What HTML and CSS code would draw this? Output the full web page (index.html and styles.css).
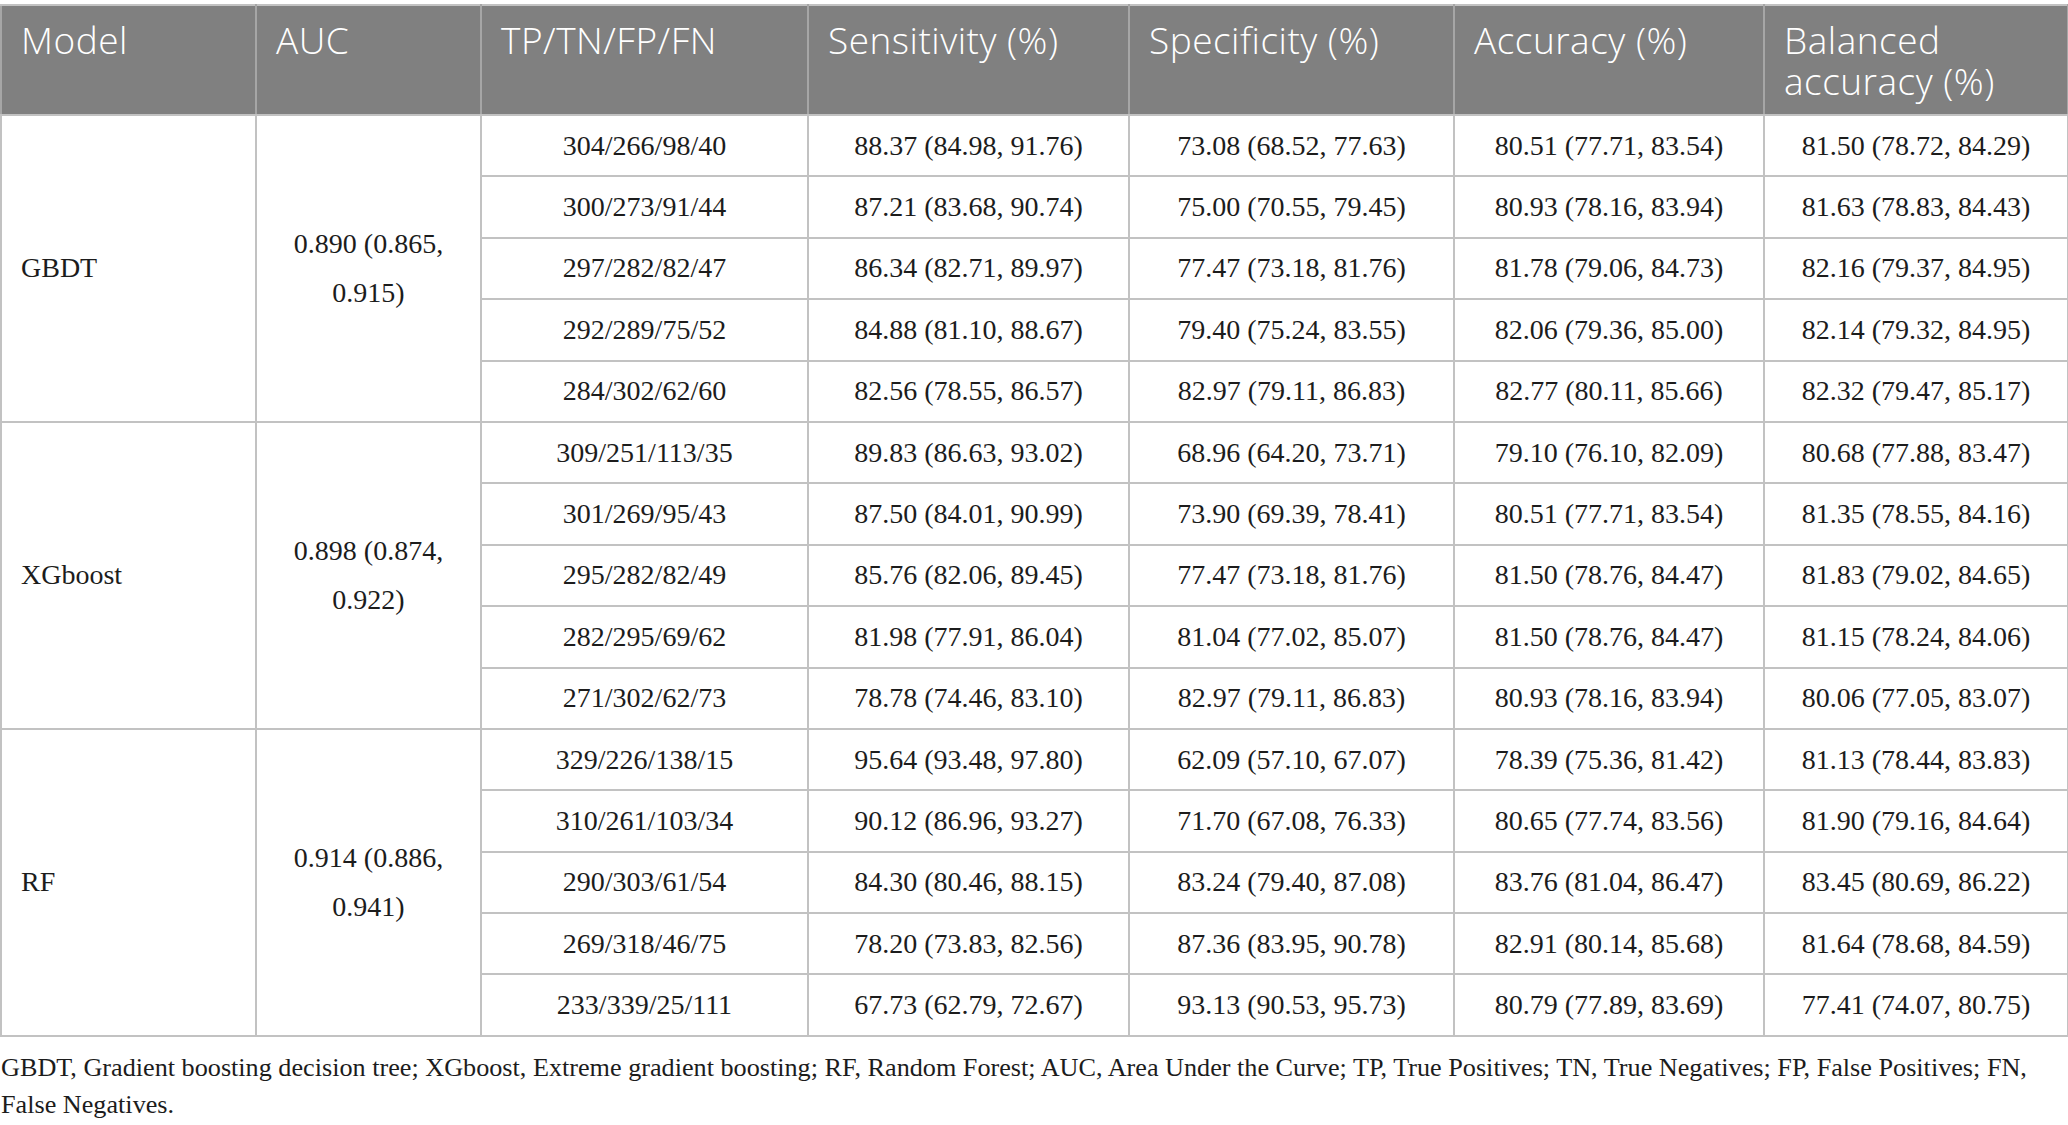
FILE: index.html
```html
<!DOCTYPE html>
<html lang="en">
<head>
<meta charset="utf-8">
<title>Model performance</title>
<link rel="stylesheet" href="styles.css">
</head>
<body>
<div class="wrap">
<table class="results">
  <colgroup>
    <col class="c1"><col class="c2"><col class="c3"><col class="c4"><col class="c5"><col class="c6"><col class="c7">
  </colgroup>
  <thead>
    <tr>
      <th>Model</th>
      <th>AUC</th>
      <th>TP/TN/FP/FN</th>
      <th>Sensitivity (%)</th>
      <th>Specificity (%)</th>
      <th>Accuracy (%)</th>
      <th>Balanced accuracy (%)</th>
    </tr>
  </thead>
  <tbody>
    <tr>
      <td rowspan="5" class="model">GBDT</td>
      <td rowspan="5" class="auc">0.890 (0.865, 0.915)</td>
      <td>304/266/98/40</td><td>88.37 (84.98, 91.76)</td><td>73.08 (68.52, 77.63)</td><td>80.51 (77.71, 83.54)</td><td>81.50 (78.72, 84.29)</td>
    </tr>
    <tr><td>300/273/91/44</td><td>87.21 (83.68, 90.74)</td><td>75.00 (70.55, 79.45)</td><td>80.93 (78.16, 83.94)</td><td>81.63 (78.83, 84.43)</td></tr>
    <tr><td>297/282/82/47</td><td>86.34 (82.71, 89.97)</td><td>77.47 (73.18, 81.76)</td><td>81.78 (79.06, 84.73)</td><td>82.16 (79.37, 84.95)</td></tr>
    <tr><td>292/289/75/52</td><td>84.88 (81.10, 88.67)</td><td>79.40 (75.24, 83.55)</td><td>82.06 (79.36, 85.00)</td><td>82.14 (79.32, 84.95)</td></tr>
    <tr><td>284/302/62/60</td><td>82.56 (78.55, 86.57)</td><td>82.97 (79.11, 86.83)</td><td>82.77 (80.11, 85.66)</td><td>82.32 (79.47, 85.17)</td></tr>
    <tr>
      <td rowspan="5" class="model">XGboost</td>
      <td rowspan="5" class="auc">0.898 (0.874, 0.922)</td>
      <td>309/251/113/35</td><td>89.83 (86.63, 93.02)</td><td>68.96 (64.20, 73.71)</td><td>79.10 (76.10, 82.09)</td><td>80.68 (77.88, 83.47)</td>
    </tr>
    <tr><td>301/269/95/43</td><td>87.50 (84.01, 90.99)</td><td>73.90 (69.39, 78.41)</td><td>80.51 (77.71, 83.54)</td><td>81.35 (78.55, 84.16)</td></tr>
    <tr><td>295/282/82/49</td><td>85.76 (82.06, 89.45)</td><td>77.47 (73.18, 81.76)</td><td>81.50 (78.76, 84.47)</td><td>81.83 (79.02, 84.65)</td></tr>
    <tr><td>282/295/69/62</td><td>81.98 (77.91, 86.04)</td><td>81.04 (77.02, 85.07)</td><td>81.50 (78.76, 84.47)</td><td>81.15 (78.24, 84.06)</td></tr>
    <tr><td>271/302/62/73</td><td>78.78 (74.46, 83.10)</td><td>82.97 (79.11, 86.83)</td><td>80.93 (78.16, 83.94)</td><td>80.06 (77.05, 83.07)</td></tr>
    <tr>
      <td rowspan="5" class="model">RF</td>
      <td rowspan="5" class="auc">0.914 (0.886, 0.941)</td>
      <td>329/226/138/15</td><td>95.64 (93.48, 97.80)</td><td>62.09 (57.10, 67.07)</td><td>78.39 (75.36, 81.42)</td><td>81.13 (78.44, 83.83)</td>
    </tr>
    <tr><td>310/261/103/34</td><td>90.12 (86.96, 93.27)</td><td>71.70 (67.08, 76.33)</td><td>80.65 (77.74, 83.56)</td><td>81.90 (79.16, 84.64)</td></tr>
    <tr><td>290/303/61/54</td><td>84.30 (80.46, 88.15)</td><td>83.24 (79.40, 87.08)</td><td>83.76 (81.04, 86.47)</td><td>83.45 (80.69, 86.22)</td></tr>
    <tr><td>269/318/46/75</td><td>78.20 (73.83, 82.56)</td><td>87.36 (83.95, 90.78)</td><td>82.91 (80.14, 85.68)</td><td>81.64 (78.68, 84.59)</td></tr>
    <tr><td>233/339/25/111</td><td>67.73 (62.79, 72.67)</td><td>93.13 (90.53, 95.73)</td><td>80.79 (77.89, 83.69)</td><td>77.41 (74.07, 80.75)</td></tr>
  </tbody>
</table>
<p class="note">GBDT, Gradient boosting decision tree; XGboost, Extreme gradient boosting; RF, Random Forest; AUC, Area Under the Curve; TP, True Positives; TN, True Negatives; FP, False Positives; FN, False Negatives.</p>
</div>
</body>
</html>
```

FILE: styles.css
```css
html, body {
  margin: 0;
  padding: 0;
  background: #ffffff;
}

.wrap {
  padding-top: 4px;
  width: 2067px;
}

.results {
  border-collapse: collapse;
  table-layout: fixed;
  width: 2067px;
  border: 2px solid #c2c2c2;
}

.c1 { width: 255px; }
.c2 { width: 225px; }
.c3 { width: 327px; }
.c4 { width: 321px; }
.c5 { width: 325px; }
.c6 { width: 310px; }
.c7 { width: 304px; }

.results th {
  background: #808080;
  color: #ffffff;
  font-family: "Open Sans", "Noto Sans", sans-serif;
  font-weight: 300;
  font-size: 37px;
  letter-spacing: 0.5px;
  line-height: 41px;
  text-align: left;
  vertical-align: top;
  padding: 13px 19px 0 19px;
  height: 110px;
  box-sizing: border-box;
  border: 2px solid #a6a6a6;
  border-top-color: #c2c2c2;
  border-bottom-color: #c2c2c2;
}

.results td {
  font-family: "Liberation Serif", "Times New Roman", serif;
  font-size: 28px;
  line-height: 34px;
  color: #1c1c1c;
  text-align: center;
  vertical-align: middle;
  height: 61.4px;
  box-sizing: border-box;
  padding: 0 10px;
  border: 2px solid #c2c2c2;
}

.results td.model {
  text-align: left;
  padding-left: 19px;
}

.results td.auc {
  line-height: 49px;
  padding: 0 14px;
}

.note {
  margin: 12px 0 0 1px;
  font-family: "Liberation Serif", "Times New Roman", serif;
  font-size: 26.2px;
  line-height: 37px;
  color: #1c1c1c;
}
```
